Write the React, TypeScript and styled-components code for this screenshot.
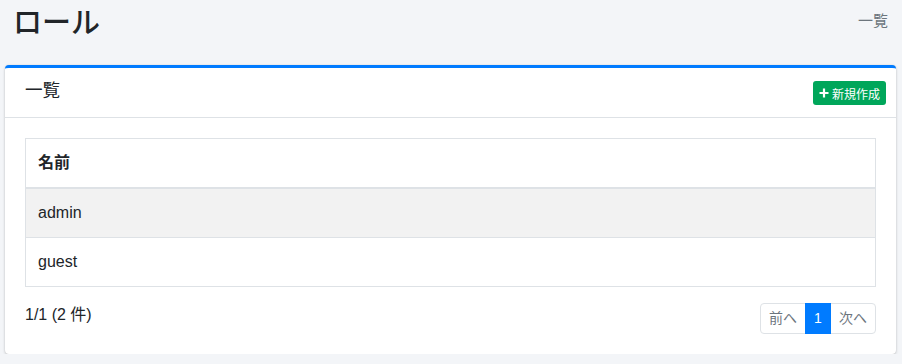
import React from "react";
import styled, { createGlobalStyle } from "styled-components";

const GlobalStyle = createGlobalStyle`
  body {
    margin: 0;
    background: #f3f5f8;
    color: #212529;
    font-family: "Liberation Sans", "Noto Sans CJK JP", sans-serif;
    font-size: 16px;
  }
  * {
    box-sizing: border-box;
  }
`;

const PageHeader = styled.div`
  display: flex;
  justify-content: space-between;
  align-items: flex-start;
  height: 65px;
  padding: 6px 14px 0 13px;
`;

const PageTitle = styled.h1`
  margin: 0;
  font-size: 29px;
  line-height: 35px;
  font-weight: 500;
`;

const Breadcrumb = styled.div`
  font-size: 15px;
  line-height: 20px;
  padding-top: 5px;
  color: #6c757d;
`;

const Card = styled.div`
  margin: 0 6px 0 5px;
  background: #fff;
  border-top: 3px solid #007bff;
  border-radius: 4px;
  box-shadow: 0 0 1px rgba(0, 0, 0, 0.125), 0 1px 3px rgba(0, 0, 0, 0.2);
`;

const CardHeader = styled.div`
  display: flex;
  justify-content: space-between;
  align-items: flex-start;
  height: 50px;
  padding: 11px 10px 0 20px;
  border-bottom: 1px solid #dee2e6;
`;

const CardTitle = styled.h3`
  margin: 0;
  font-size: 17.6px;
  line-height: 22px;
  font-weight: 400;
`;

const AddButton = styled.button`
  display: inline-flex;
  align-items: center;
  gap: 3px;
  height: 24px;
  margin-top: 2px;
  padding: 0 6px 0 6px;
  border: none;
  border-radius: 3px;
  background: #00a65a;
  color: #fff;
  font-family: inherit;
  font-size: 12px;
  cursor: pointer;
`;

const CardBody = styled.div`
  padding: 20px;
`;

const Table = styled.table`
  width: 100%;
  border-collapse: collapse;
  border: 1px solid #dee2e6;
`;

const Th = styled.th`
  text-align: left;
  font-weight: 700;
  padding: 12px;
  line-height: 24px;
  border-bottom: 2px solid #dee2e6;
`;

const Row = styled.tr<{ $striped?: boolean }>`
  background: ${(p) => (p.$striped ? "#f2f2f2" : "#fff")};
`;

const Td = styled.td`
  padding: 12px;
  line-height: 24px;
  border-top: 1px solid #dee2e6;
`;

const Footer = styled.div`
  display: flex;
  justify-content: space-between;
  align-items: flex-start;
  margin-top: 16px;
`;

const Summary = styled.div`
  line-height: 24px;
`;

const Pager = styled.ul`
  display: flex;
  margin: 0;
  padding: 0;
  list-style: none;
`;

const PageItem = styled.li<{ $active?: boolean }>`
  padding: 4px 8px;
  font-size: 14px;
  line-height: 21px;
  min-width: 26px;
  text-align: center;
  border: 1px solid ${(p) => (p.$active ? "#007bff" : "#dee2e6")};
  margin-left: -1px;
  background: ${(p) => (p.$active ? "#007bff" : "#fff")};
  color: ${(p) => (p.$active ? "#fff" : "#6c757d")};
  position: relative;
  z-index: ${(p) => (p.$active ? 1 : 0)};

  &:first-child {
    margin-left: 0;
    border-radius: 4px 0 0 4px;
  }
  &:last-child {
    border-radius: 0 4px 4px 0;
  }
`;

const PlusIcon = () => (
  <svg width="10" height="10" viewBox="0 0 10 10">
    <path d="M5 0.5v9M0.5 5h9" stroke="#fff" strokeWidth="2.2" />
  </svg>
);

const roles = ["admin", "guest"];

export default function App() {
  return (
    <>
      <GlobalStyle />
      <PageHeader>
        <PageTitle>ロール</PageTitle>
        <Breadcrumb>一覧</Breadcrumb>
      </PageHeader>
      <Card>
        <CardHeader>
          <CardTitle>一覧</CardTitle>
          <AddButton>
            <PlusIcon />
            新規作成
          </AddButton>
        </CardHeader>
        <CardBody>
          <Table>
            <thead>
              <tr>
                <Th>名前</Th>
              </tr>
            </thead>
            <tbody>
              {roles.map((r, i) => (
                <Row key={r} $striped={i % 2 === 0}>
                  <Td>{r}</Td>
                </Row>
              ))}
            </tbody>
          </Table>
          <Footer>
            <Summary>1/1 (2 件)</Summary>
            <Pager>
              <PageItem>前へ</PageItem>
              <PageItem $active>1</PageItem>
              <PageItem>次へ</PageItem>
            </Pager>
          </Footer>
        </CardBody>
      </Card>
    </>
  );
}
